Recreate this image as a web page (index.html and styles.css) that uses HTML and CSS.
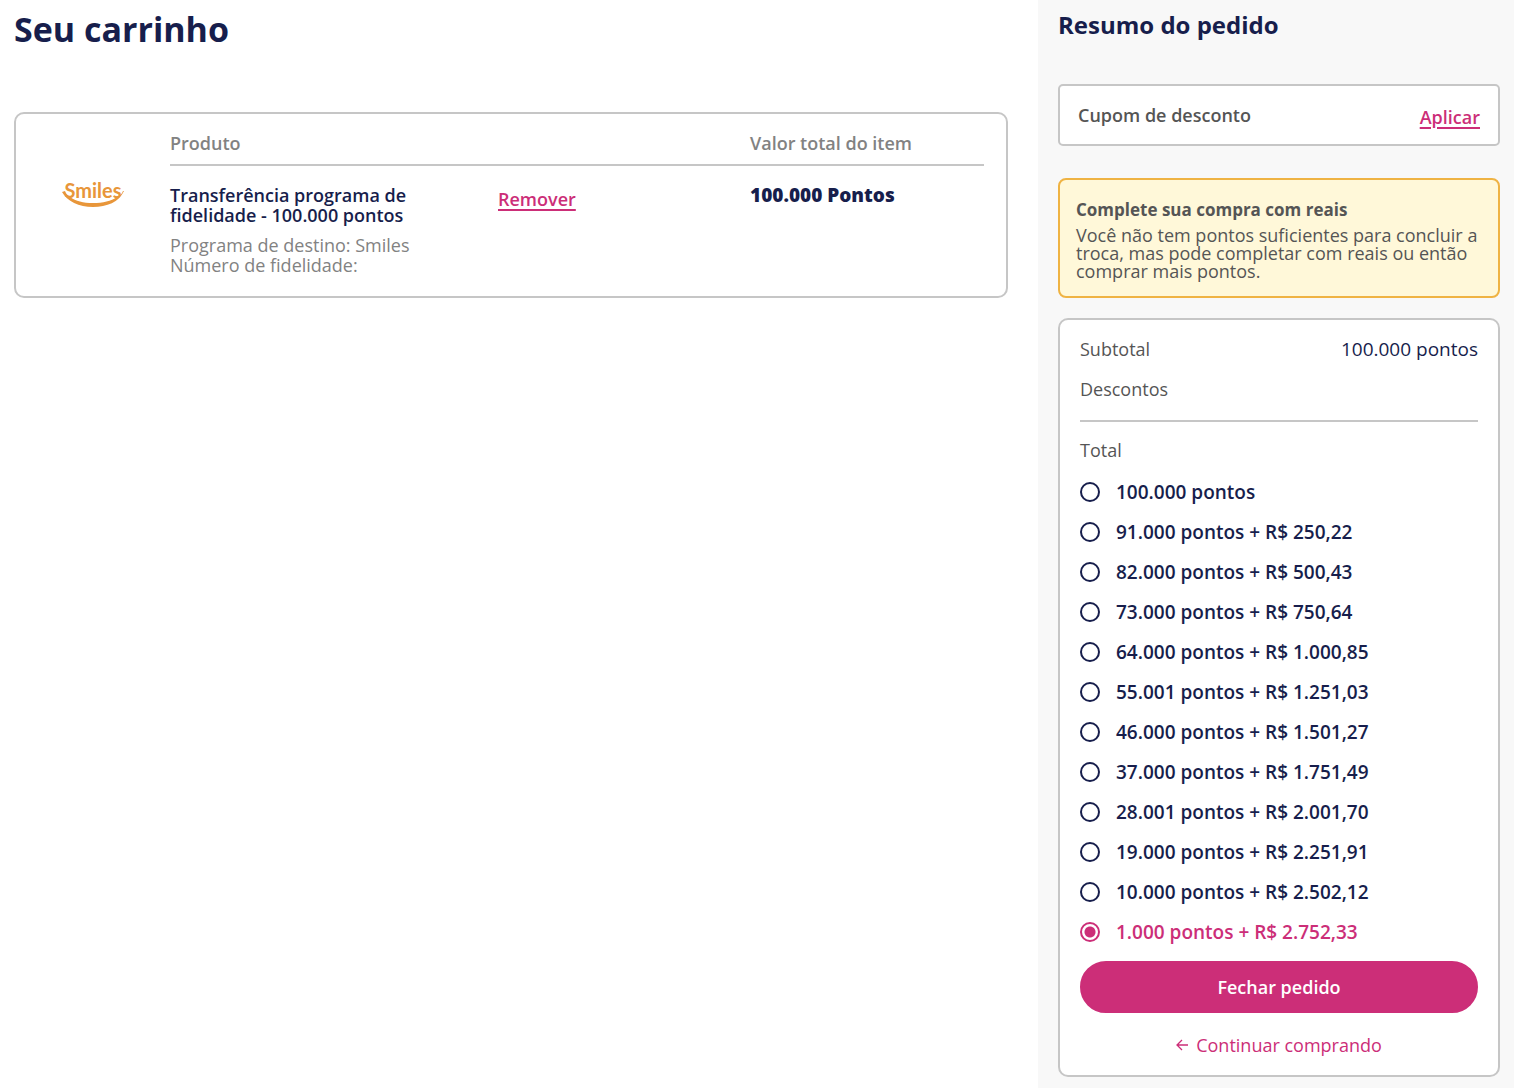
FILE: index.html
```html
<!DOCTYPE html>
<html lang="pt-BR">
<head>
    <meta charset="UTF-8">
    <meta name="viewport" content="width=device-width, initial-scale=1.0">
    <title>Seu carrinho</title>
    <link rel="stylesheet" href="styles.css">
</head>
<body>
    <div class="page">
        <main class="cart">
            <h1>Seu carrinho</h1>

            <div class="cart-item">
                <div class="item-logo">
                    <svg width="64" height="36" viewBox="0 -8 64 36" role="img" aria-label="Smiles">
                        <text class="logo-text" x="32" y="18" text-anchor="middle">Smiles</text>
                        <path d="M1 12 L4 11 C5 14 7 16 9 17 C15 21 22 23 32 23 C42 23 50 21 56 17 C59 16 61 14 62 11 L63 11 C58 22 46 27 32 27 C18 27 6 21 1 12 Z" fill="#e8963a"/>
                    </svg>
                </div>
                <table class="item-table">
                    <thead>
                        <tr>
                            <th class="col-product">Produto</th>
                            <th class="col-action"></th>
                            <th class="col-price">Valor total do item</th>
                        </tr>
                    </thead>
                    <tbody>
                        <tr>
                            <td>
                                <div class="item-name">Transferência programa de fidelidade - 100.000 pontos</div>
                                <div class="item-info">Programa de destino: Smiles
Número de fidelidade:</div>
                            </td>
                            <td><button type="button" class="text-button">Remover</button></td>
                            <td class="item-price">100.000 Pontos</td>
                        </tr>
                    </tbody>
                </table>
            </div>
        </main>

        <aside class="summary">
            <h2>Resumo do pedido</h2>

            <div class="coupon">
                <span>Cupom de desconto</span>
                <button type="button" class="text-button">Aplicar</button>
            </div>

            <div class="notice">
                <h3>Complete sua compra com reais</h3>
                <p>Você não tem pontos suficientes para concluir a troca, mas pode completar com reais ou então comprar mais pontos.</p>
            </div>

            <form class="order">
                <div class="order-row">
                    <span>Subtotal</span>
                    <span class="order-value">100.000 pontos</span>
                </div>
                <div class="order-row">
                    <span>Descontos</span>
                </div>
                <hr>
                <fieldset class="options">
                    <legend>Total</legend>
                    <label class="option"><input type="radio" name="total"><span>100.000 pontos</span></label>
                    <label class="option"><input type="radio" name="total"><span>91.000 pontos + R$ 250,22</span></label>
                    <label class="option"><input type="radio" name="total"><span>82.000 pontos + R$ 500,43</span></label>
                    <label class="option"><input type="radio" name="total"><span>73.000 pontos + R$ 750,64</span></label>
                    <label class="option"><input type="radio" name="total"><span>64.000 pontos + R$ 1.000,85</span></label>
                    <label class="option"><input type="radio" name="total"><span>55.001 pontos + R$ 1.251,03</span></label>
                    <label class="option"><input type="radio" name="total"><span>46.000 pontos + R$ 1.501,27</span></label>
                    <label class="option"><input type="radio" name="total"><span>37.000 pontos + R$ 1.751,49</span></label>
                    <label class="option"><input type="radio" name="total"><span>28.001 pontos + R$ 2.001,70</span></label>
                    <label class="option"><input type="radio" name="total"><span>19.000 pontos + R$ 2.251,91</span></label>
                    <label class="option"><input type="radio" name="total"><span>10.000 pontos + R$ 2.502,12</span></label>
                    <label class="option"><input type="radio" name="total" checked><span>1.000 pontos + R$ 2.752,33</span></label>
                </fieldset>
                <button type="button" class="checkout-button">Fechar pedido</button>
                <a href="#" class="back-link">
                    <svg width="12" height="12" viewBox="0 0 12 12" fill="none" stroke="currentColor" stroke-width="1.3" aria-hidden="true">
                        <path d="M12 6 H1 M6 1 L1 6 L6 11"/>
                    </svg>
                    <span>Continuar comprando</span>
                </a>
            </form>
        </aside>
    </div>
</body>
</html>
```
FILE: styles.css
```css
* {
    box-sizing: border-box;
}
body {
    margin: 0;
    background: #fff;
    color: #555;
    font-family: "Open Sans", "Noto Sans", sans-serif;
    font-size: 18px;
    line-height: 20px;
}
h1, h2, h3, p {
    margin: 0;
}
button {
    font-family: inherit;
    font-size: inherit;
    line-height: inherit;
    cursor: pointer;
}
.page {
    display: grid;
    grid-template-columns: minmax(0, 1fr) 476px;
    min-height: 100vh;
}
.cart {
    padding: 5px 30px 20px 14px;
}
h1 {
    margin-bottom: 59px;
    color: #171e4c;
    font-size: 34px;
    line-height: 48px;
}
.cart-item {
    display: flex;
    gap: 20px;
    padding: 8px 22px 21px 20px;
    border: 2px solid #c6c6c6;
    border-radius: 10px;
}
.item-logo {
    flex: 0 0 114px;
    padding-top: 50px;
    text-align: center;
}
.logo-text {
    fill: #e8963a;
    font-family: Lato, sans-serif;
    font-size: 20px;
    font-weight: 700;
}
.item-table {
    flex: 1;
    table-layout: fixed;
    border-collapse: collapse;
}
.item-table th {
    height: 43px;
    padding: 0;
    border-bottom: 2px solid #c6c6c6;
    color: #828282;
    font-weight: 600;
    text-align: left;
}
.item-table td {
    padding: 19px 0 0;
    vertical-align: top;
}
.item-table .col-product {
    width: 328px;
}
.item-table .col-action {
    width: 252px;
}
.item-name {
    max-width: 260px;
    margin-bottom: 10px;
    color: #171e4c;
    font-weight: 600;
}
.item-info {
    color: #828282;
    white-space: pre-line;
}
.item-table .item-price {
    color: #171e4c;
    font-size: 19px;
    font-weight: 800;
}
.text-button {
    padding: 4px 0 0;
    border: 0;
    background: none;
    color: #cc2e78;
    font-weight: 600;
    text-decoration: underline;
    text-decoration-thickness: 2px;
    text-underline-offset: 3px;
}
.summary {
    padding: 10px 14px 10px 20px;
    background: #f8f8f8;
}
h2 {
    margin-bottom: 44px;
    color: #171e4c;
    font-size: 24px;
    line-height: 30px;
}
.coupon {
    display: flex;
    align-items: center;
    justify-content: space-between;
    height: 62px;
    margin-bottom: 32px;
    padding: 0 18px;
    border: 2px solid #c6c6c6;
    border-radius: 5px;
    background: #fff;
    font-weight: 600;
}
.notice {
    margin-bottom: 20px;
    padding: 20px 16px 16px;
    border: 2px solid #efb343;
    border-radius: 8px;
    background: #fff8d9;
}
.notice h3 {
    margin-bottom: 6px;
    font-size: 17px;
    line-height: 20px;
}
.notice p {
    line-height: 18px;
}
.order {
    padding: 9px 20px 10px;
    border: 2px solid #c6c6c6;
    border-radius: 10px;
    background: #fff;
}
.order-row {
    display: flex;
    justify-content: space-between;
    line-height: 40px;
}
.order-value {
    color: #171e4c;
    font-size: 19px;
}
hr {
    margin: 11px 0 8px;
    border: 0;
    border-top: 2px solid #c6c6c6;
}
.options {
    margin: 0;
    padding: 0;
    border: 0;
}
.options legend {
    padding: 0 0 2px;
    line-height: 40px;
}
.option {
    display: flex;
    align-items: center;
    gap: 16px;
    height: 40px;
    color: #171e4c;
    font-size: 19px;
    font-weight: 600;
    cursor: pointer;
}
.option input {
    appearance: none;
    width: 20px;
    height: 20px;
    margin: 0;
    border: 2px solid #171e4c;
    border-radius: 50%;
}
.option input:checked {
    border-color: #cc2e78;
    background: radial-gradient(circle, #cc2e78 5px, transparent 6px);
}
.option:has(input:checked) {
    color: #cc2e78;
}
.checkout-button {
    display: block;
    width: 100%;
    height: 52px;
    margin: 9px 0 12px;
    border: 2px solid #cc2e78;
    border-radius: 26px;
    background: #cc2e78;
    color: #fff;
    font-weight: 600;
}
.back-link {
    display: flex;
    align-items: center;
    justify-content: center;
    gap: 8px;
    height: 40px;
    color: #cc2e78;
    text-decoration: none;
}
```
